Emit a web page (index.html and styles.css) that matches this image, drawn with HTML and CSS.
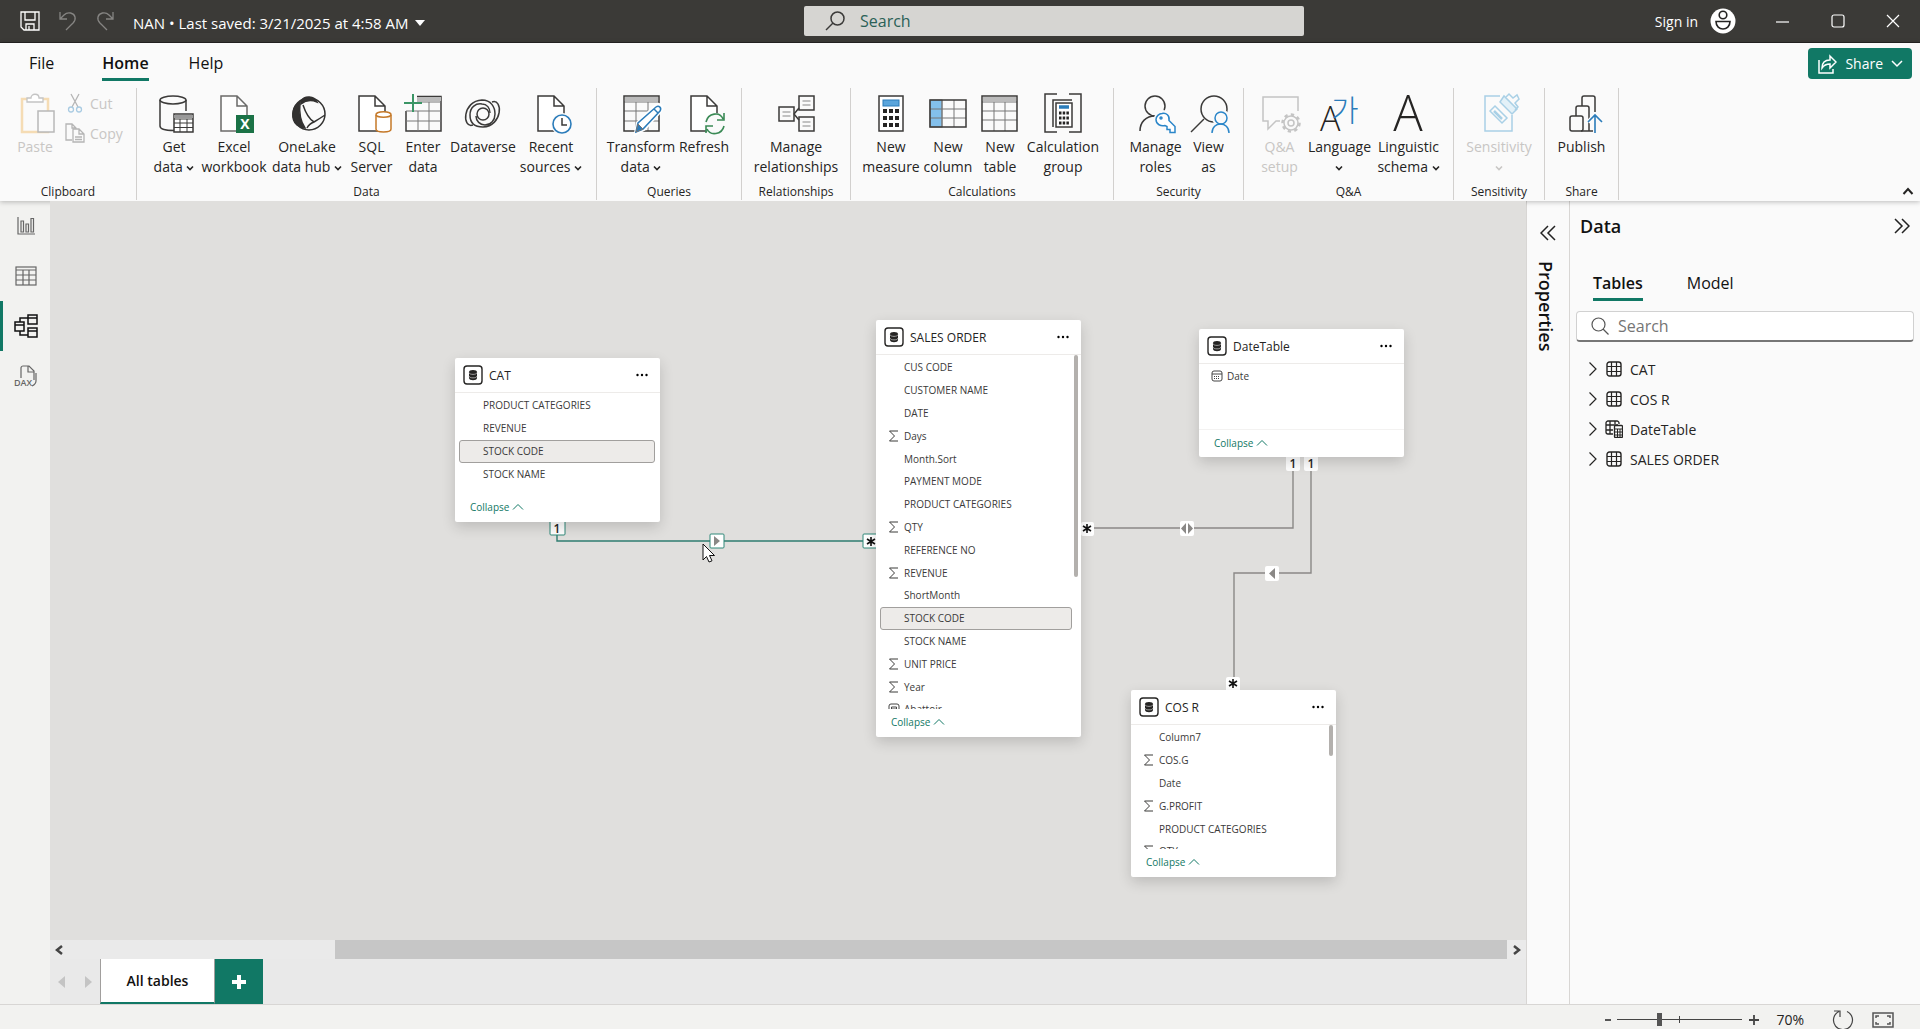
FILE: index.html
```html
<!DOCTYPE html>
<html lang="en">
<head>
    <meta charset="UTF-8">
    <meta name="viewport" content="width=device-width, initial-scale=1.0">
    <title>NAN - Model view</title>
    <link rel="stylesheet" href="styles.css">
</head>
<body>
    <!-- shared icons -->
    <svg class="defs" width="0" height="0">
        <symbol id="chev" viewBox="0 0 8 8"><path d="M1 2.5l3 3 3-3" fill="none" stroke="currentColor" stroke-width="1.6"/></symbol>
        <symbol id="up" viewBox="0 0 12 8"><path d="M1 6.5l5-5 5 5" fill="none" stroke="currentColor"/></symbol>
        <symbol id="sum" viewBox="0 0 12 12"><path d="M10 1H1.500l5 5-5 5H10" fill="none" stroke="currentColor"/></symbol>
        <symbol id="db" viewBox="0 0 20 20">
            <rect x="1" y="1" width="18" height="18" rx="3" fill="#fff" stroke="#252423" stroke-width="1.4"/>
            <path d="M6 7v6c0 3 8 3 8 0V7z" fill="#252423"/><ellipse cx="10" cy="7" rx="4" ry="2" fill="#252423"/>
            <path d="M6 7.500c0 2.500 8 2.500 8 0M6 11c0 2.500 8 2.500 8 0" fill="none" stroke="#bbb" stroke-width=".8"/>
        </symbol>
        <symbol id="dots" viewBox="0 0 12 4"><circle cx="1.500" cy="2" r="1.200"/><circle cx="6" cy="2" r="1.200"/><circle cx="10.500" cy="2" r="1.200"/></symbol>
        <symbol id="tbl" viewBox="0 0 16 16"><rect x="1" y="1" width="14" height="14" rx="2.500" fill="none" stroke="currentColor" stroke-width="1.400"/><path d="M5.500 1v14M10.500 1v14M1 5.500h14M1 10.500h14" stroke="currentColor" stroke-width="1.200"/></symbol>
        <symbol id="tbl-calc" viewBox="0 0 18 18"><path d="M14 4V3c0-1-1-2-2-2H3C2 1 1 2 1 3v9c0 1 1 2 2 2h5M5 1v13M1 5h12M1 10h7M10 1v3" fill="none" stroke="currentColor" stroke-width="1.300"/><rect x="9.500" y="5.500" width="8" height="12" rx="1" fill="#fff" stroke="currentColor" stroke-width="1.300"/><path d="M10 9h7M10 12h7M10 15h7M12.500 9v8M15 9v8" stroke="currentColor"/></symbol>
        <symbol id="right" viewBox="0 0 10 16"><path d="M1.500 1.500L8 8l-6.500 6.500" fill="none" stroke="currentColor" stroke-width="1.200"/></symbol>
        <symbol id="page" viewBox="0 0 40 40"><path d="M23 3H7v35h26V13zM23 3v10h10" fill="#fff" stroke="#3b3a39" stroke-width="1.500"/></symbol>
    </svg>

    <header class="titlebar">
        <div class="title-left">
            <button class="plain" aria-label="Save"><svg width="20" height="20" fill="none" stroke="#fff" stroke-width="1.300"><path d="M1 1h18v18H4l-3-3zM5 1v8h10V1M6 19v-6h8v6M9 15v4"/></svg></button>
            <button class="plain" aria-label="Undo"><svg width="18" height="20" fill="none" stroke="#868583" stroke-width="1.300"><path d="M1 1v7h7M1 8l4-4c4-4 10-2 11 2s-1 5-3 7l-6 6"/></svg></button>
            <button class="plain" aria-label="Redo"><svg width="18" height="20" fill="none" stroke="#868583" stroke-width="1.300"><path d="M17 1v7h-7M17 8l-4-4C9 0 3 2 2 6s1 5 3 7l6 6"/></svg></button>
            <button class="plain file-name">NAN • Last saved: 3/21/2025 at 4:58 AM <svg width="10" height="6" fill="#fff"><path d="M0 0h10L5 6z"/></svg></button>
        </div>
        <label class="title-search">
            <svg width="20" height="20" fill="none" stroke="#3b3a39" stroke-width="1.500"><circle cx="12.500" cy="7.500" r="6.500"/><path d="M8 12l-7 7"/></svg>
            <input type="text" placeholder="Search" aria-label="Search">
        </label>
        <div class="title-right">
            <button class="plain">Sign in</button>
            <svg class="avatar" width="26" height="26" fill="none" stroke="#252423" stroke-width="1.600"><circle cx="13" cy="13" r="12.500" fill="#fff" stroke="none"/><circle cx="13" cy="7" r="3.800"/><path d="M6 13.500h14c0 10-14 10-14 0z"/></svg>
            <button class="win" aria-label="Minimize"><svg width="14" height="14" stroke="#fff" stroke-width="1.200"><path d="M0 8h13"/></svg></button>
            <button class="win" aria-label="Maximize"><svg width="14" height="14" fill="none" stroke="#fff" stroke-width="1.200"><rect x="1" y="1" width="12" height="12" rx="2"/></svg></button>
            <button class="win" aria-label="Close"><svg width="14" height="14" stroke="#fff" stroke-width="1.200"><path d="M1 1l12 12M13 1L1 13"/></svg></button>
        </div>
    </header>

    <div class="ribbon">
        <nav class="tabs">
            <a href="#" class="tab file">File</a>
            <a href="#" class="tab active">Home</a>
            <a href="#" class="tab">Help</a>
            <button class="share"><svg width="20" height="20" fill="none" stroke="#fff" stroke-width="1.500"><path d="M2 6v13h14v-4M5 14c0-6 3-8 8-8V2l6 6-6 6v-4c-4 0-6 1-8 4z"/></svg>Share<svg width="12" height="8" fill="none" stroke="#fff" stroke-width="1.500"><path d="M1 1l5 5 5-5"/></svg></button>
        </nav>
        <div class="groups">
            <section class="group clipboard">
                <div class="tools">
                    <button class="tool" disabled><svg width="40" height="40" fill="none"><path d="M12 6H7v33h26V6h-5" stroke="#f5dcb4" stroke-width="2.500"/><path d="M12 9V5h4c0-5 8-5 8 0h4v4z" stroke="#c4c4c4" stroke-width="1.300" fill="#fff"/><rect x="23" y="18" width="16" height="21" fill="#fafafa" stroke="#b8b8b8" stroke-width="1.500"/></svg>Paste</button>
                    <div class="stack">
                        <button class="small" disabled><svg width="20" height="20" fill="none" stroke="#b5b5b5" stroke-width="1.300"><path d="M6 1l7 13M14 1L7 14"/><circle cx="6" cy="16.500" r="2.500" stroke="#a9cbe2"/><circle cx="14" cy="16.500" r="2.500" stroke="#a9cbe2"/></svg>Cut</button>
                        <button class="small" disabled><svg width="20" height="20" fill="none" stroke="#b5b5b5" stroke-width="1.300"><path d="M7 17H1V1h6l4 4v1M7 1v4h4"/><path d="M8 6h6l5 5v8H8zM14 6v5h5M10 14h7M10 16.500h7"/></svg>Copy</button>
                    </div>
                </div>
                <h3>Clipboard</h3>
            </section>
            <section class="group data">
                <div class="tools">
                    <button class="tool"><svg width="40" height="40" fill="none" stroke="#3b3a39" stroke-width="1.500"><path d="M6 7v26c0 3 6 4.500 14 4.500M32 7v11"/><ellipse cx="19" cy="7" rx="13" ry="4"/><rect x="20" y="21" width="19" height="18" fill="#fff"/><path d="M20 23.500h19" stroke="#999" stroke-width="3"/><path d="M20 26h19M20 30h19M20 34.500h19M26 26v13M33 26v13" stroke-width="1"/></svg>Get<br>data <svg class="chev"><use href="#chev"/></svg></button>
                    <button class="tool"><svg width="40" height="40"><use href="#page" opacity=".75"/><rect x="22" y="22" width="18" height="18" fill="#1b7246"/><text x="31" y="36" class="xl">X</text></svg>Excel<br>workbook</button>
                    <button class="tool"><svg width="40" height="40" fill="none" stroke="#323130" stroke-width="1.500"><circle cx="22" cy="21" r="16"/><path d="M14 8c4-6 13-5 16 1-5-2-11-2-16 2z" fill="#323130"/><path d="M13 9C4 14 4 27 10 32c3 2 6 3 8 3-5-7-6-16-5-26z" fill="#323130"/><path d="M16 12c3 9 6 14 11 17 5-3 8-5 11-7M20 35c2-4 4-5 7-6"/></svg>OneLake<br>data hub <svg class="chev"><use href="#chev"/></svg></button>
                    <button class="tool"><svg width="40" height="40"><use href="#page"/><path d="M24 22v14c0 4 15 4 15 0V22" fill="#fff" stroke="#c57929" stroke-width="1.500"/><ellipse cx="31.500" cy="21.500" rx="7.500" ry="2.800" fill="#fff" stroke="#c57929" stroke-width="1.500"/></svg>SQL<br>Server</button>
                    <button class="tool"><svg width="40" height="40" fill="none" stroke="#3b3a39"><path d="M14 3.500h24V38H3V18" stroke-width="1.500"/><path d="M14 6h24" stroke="#bbb" stroke-width="4"/><path d="M14 9h24M3 18h35M3 28h35M15 18v20M26 9v29" stroke="#777"/><path d="M1 10h18M10 1v18" stroke="#3a9565" stroke-width="2"/></svg>Enter<br>data</button>
                    <button class="tool"><svg width="40" height="40" fill="none" stroke="#3b3a39" stroke-width="1.500"><path d="M10 32C-1 36-1 8 19 7c9 0 13 7 13 14 0 6-4 11-10 11-5 0-9-4-9-9"/><path d="M29 9c11-4 11 24-9 25-9 0-13-5-13-12 0-8 6-12 12-11 5 0 8 4 8 9"/><circle cx="20" cy="21" r="6"/></svg>Dataverse</button>
                    <button class="tool"><svg width="40" height="40"><use href="#page"/><circle cx="31" cy="31" r="11" fill="#fafafa"/><circle cx="31" cy="31" r="9" fill="#fff" stroke="#2b7cba" stroke-width="1.600"/><path d="M31 25v7h5" fill="none" stroke="#3b3a39" stroke-width="1.500"/></svg>Recent<br>sources <svg class="chev"><use href="#chev"/></svg></button>
                </div>
                <h3>Data</h3>
            </section>
            <section class="group queries">
                <div class="tools">
                    <button class="tool"><svg width="40" height="40" fill="none" stroke="#777"><path d="M4 6h33" stroke="#bbb" stroke-width="4"/><path d="M3 9h35M3 18h35M3 28h35M15 9v29M27 9v29"/><rect x="3" y="3" width="35" height="35" stroke="#3b3a39" stroke-width="1.500"/><path d="M15 40l2-10 18-17c3-3 7 1 5 4L23 36z" fill="#fff" stroke="#fff" stroke-width="4"/><path d="M15 39l2-9 18-16c3-2 6 1 4 4L22 36zM33 16l4 4" fill="#fff" stroke="#2b7cba" stroke-width="1.500"/><path d="M15 39l2-8 5 5z" fill="#2b7cba"/></svg>Transform<br>data <svg class="chev"><use href="#chev"/></svg></button>
                    <button class="tool"><svg width="40" height="40"><use href="#page"/><circle cx="31" cy="31" r="11" fill="#fafafa"/><path d="M22 29c2-9 14-11 17-3M40 20v7h-7M40 33c-2 9-14 10-17 3M22 40v-7h7" fill="none" stroke="#3a8a55" stroke-width="1.600"/></svg>Refresh</button>
                </div>
                <h3>Queries</h3>
            </section>
            <section class="group relationships">
                <div class="tools">
                    <button class="tool"><svg width="40" height="40" fill="none" stroke="#3b3a39" stroke-width="1.500"><rect x="3" y="14" width="15" height="14"/><rect x="23" y="3" width="15" height="14"/><rect x="23" y="24" width="15" height="14"/><path d="M18 21l5-6M18 21l5 6"/><path d="M6.500 19h8M6.500 23h8M26.500 8h8M26.500 12h8M26.500 29h8M26.500 33h8" stroke="#888" stroke-width="1"/></svg>Manage<br>relationships</button>
                </div>
                <h3>Relationships</h3>
            </section>
            <section class="group calculations">
                <div class="tools">
                    <button class="tool"><svg width="40" height="40"><rect x="8" y="3" width="24" height="35" fill="#fff" stroke="#3b3a39" stroke-width="1.500"/><rect x="12" y="7" width="16" height="6" fill="#5aa5dc" stroke="#2b7cba"/><path d="M12 18h16M12 25h16M12 32h16" stroke="#252423" stroke-width="4" stroke-dasharray="4 2"/></svg>New<br>measure</button>
                    <button class="tool"><svg width="40" height="40" fill="none" stroke="#777"><rect x="2" y="7" width="12" height="27" fill="#83c0ec"/><path d="M2 16h36M2 25h36M14 7v27M26 7v27"/><rect x="2" y="7" width="36" height="27" stroke="#3b3a39" stroke-width="1.500"/></svg>New<br>column</button>
                    <button class="tool"><svg width="40" height="40" fill="none" stroke="#777"><path d="M3 6h33" stroke="#bbb" stroke-width="4"/><path d="M2 9h35M2 18h35M2 27h35M14 9v29M25 9v29"/><rect x="2" y="3" width="35" height="35" stroke="#3b3a39" stroke-width="1.500"/></svg>New<br>table</button>
                    <button class="tool"><svg width="40" height="40" fill="none" stroke="#3b3a39" stroke-width="1.500"><path d="M14 1H2v38h12M26 1h12v38H26"/><path d="M10 34V7h19"/><rect x="13" y="10" width="16" height="24" fill="#fff"/><path d="M16 14h10" stroke="#2b7cba" stroke-width="3.500"/><path d="M16 20h10M16 25h10M16 30h10" stroke="#252423" stroke-width="3" stroke-dasharray="2.500 1.200"/></svg>Calculation<br>group</button>
                </div>
                <h3>Calculations</h3>
            </section>
            <section class="group security">
                <div class="tools">
                    <button class="tool"><svg width="40" height="40" fill="none" stroke="#3b3a39" stroke-width="1.500"><circle cx="20" cy="13" r="10"/><path d="M5 38c0-9 6-15 15-15"/><circle cx="28" cy="26" r="6.500" fill="#fafafa" stroke="#fafafa" stroke-width="5"/><path d="M27 20.500c4-1 8 2 7 7l6 6v6h-5v-3h-3v-3l-2-1c-4 1-9-1-9-6 0-3 3-6 6-6z" stroke="#2b86c9" fill="#fff"/><circle cx="26" cy="25" r="1" stroke="#2b86c9"/></svg>Manage<br>roles</button>
                    <button class="tool"><svg width="40" height="40" fill="none" stroke="#3b3a39" stroke-width="1.500"><circle cx="25" cy="16" r="13"/><path d="M15 26L2 39"/><circle cx="32" cy="25" r="9" fill="#fafafa" stroke="none"/><g stroke="#2b86c9"><circle cx="32" cy="25" r="6"/><path d="M23 40c0-12 17-12 17 0"/></g></svg>View<br>as</button>
                </div>
                <h3>Security</h3>
            </section>
            <section class="group qna">
                <div class="tools">
                    <button class="tool" disabled><svg width="40" height="40" fill="none" stroke="#c4c4c4" stroke-width="1.500"><path d="M20 28h-4l-8 8v-8H3V4h35v14"/><circle cx="31" cy="30" r="7"/><circle cx="31" cy="30" r="3"/><circle cx="31" cy="30" r="8.500" stroke-width="2.500" stroke-dasharray="3.300 3.300"/></svg>Q&amp;A<br>setup</button>
                    <button class="tool"><svg width="40" height="40"><text x="1" y="38" class="lang-a">A</text><text x="12" y="28" class="lang-ko">가</text></svg>Language<br><svg class="chev"><use href="#chev"/></svg></button>
                    <button class="tool"><svg width="40" height="40"><text x="20" y="38" class="big-a">A</text></svg>Linguistic<br>schema <svg class="chev"><use href="#chev"/></svg></button>
                </div>
                <h3>Q&amp;A</h3>
            </section>
            <section class="group sensitivity">
                <div class="tools">
                    <button class="tool" disabled><svg width="40" height="40" fill="none" stroke="#a9d0e6" stroke-width="1.500"><path d="M21 3H6v35h27V22"/><path d="M11 18l5-5 12 12-5 5z"/><path d="M15 18l8 8" stroke-width="2.500"/><path d="M21 9l4-6 13 13-5 5z" fill="#e3f1f8"/><path d="M27 4l3-3 4 4 4-3 2 4-4 4 3 4-3 3"/></svg>Sensitivity<br><svg class="chev"><use href="#chev"/></svg></button>
                </div>
                <h3>Sensitivity</h3>
            </section>
            <section class="group publish">
                <div class="tools">
                    <button class="tool"><svg width="40" height="40" fill="none" stroke="#3b3a39" stroke-width="1.500"><rect x="8" y="23" width="13" height="15" rx="2"/><path d="M14 23v-8c0-1 1-2 2-2h9c1 0 2 1 2 2v23M20 13V5c0-1 1-2 2-2h9c1 0 2 1 2 2v14M19 38h12"/><path d="M33 40V22M26 29l7-7 7 7" stroke="#fafafa" stroke-width="4"/><path d="M33 40V22M26 29l7-7 7 7" stroke="#2b7cba" stroke-width="1.600"/></svg>Publish</button>
                </div>
                <h3>Share</h3>
            </section>
            <button class="plain ribbon-up" aria-label="Collapse the ribbon"><svg width="12" height="8" fill="none" stroke="#252423" stroke-width="2"><path d="M1.500 7L6 2l4.500 5"/></svg></button>
        </div>
    </div>

    <div class="main">
        <nav class="views">
            <a href="#" aria-label="Report view"><svg width="20" height="20" fill="none" stroke="#666" stroke-width="1.200"><path d="M2 1v17h17"/><path d="M5 5h2.500v11H5zM10 8h2.500v8H10zM15 2.500h2.500V16H15z"/></svg></a>
            <a href="#" aria-label="Table view"><svg width="22" height="20" fill="none" stroke="#666" stroke-width="1.200"><rect x="1" y="1" width="20" height="18"/><path d="M1 4h20M1 9h20M1 14h20M8 4v15M14 4v15"/></svg></a>
            <a href="#" class="current" aria-label="Model view"><svg width="24" height="24" fill="none" stroke="#111" stroke-width="1.500"><rect x="1" y="8" width="9" height="9"/><rect x="14" y="1" width="9" height="9"/><rect x="14" y="14" width="9" height="9"/><path d="M1 11h9M14 4h9M14 17h9M6 8V4h8M6 17v4h8"/></svg></a>
            <a href="#" aria-label="DAX query view"><svg width="24" height="24" fill="none" stroke="#666" stroke-width="1.200"><path d="M7 14V4c0-1 1-2 2-2h6l5 5v9M14 2v6h6M22 9v8c0 3-2 4-4 5"/><text x="0" y="22" class="dax">DAX</text></svg></a>
        </nav>

        <div class="workspace">
            <div class="canvas">
                <svg class="lines" width="1476" height="739">
                    <g fill="none" stroke="#8a8886" stroke-width="1.400">
                        <path d="M1032 327h211v-71M1261 256v116h-77v117"/>
                        <path d="M507 327v13h319" stroke="#2f7d70"/>
                    </g>
                    <g fill="#fff">
                        <rect x="500" y="318" width="15" height="16" rx="1" stroke="#2f8878"/>
                        <rect x="660" y="333" width="14" height="14" rx="1" stroke="#2f8878"/>
                        <rect x="813" y="333" width="15" height="14" rx="1" stroke="#2f8878"/>
                        <rect x="1031" y="321" width="13" height="14" rx="2"/>
                        <rect x="1130" y="320" width="14" height="15" rx="2"/>
                        <rect x="1236" y="252" width="14" height="18" rx="2"/>
                        <rect x="1254" y="252" width="14" height="18" rx="2"/>
                        <rect x="1215" y="365" width="14" height="15" rx="2"/>
                        <rect x="1176" y="476" width="14" height="15" rx="2"/>
                    </g>
                    <g fill="#8a8886">
                        <path d="M664 335v10l6-5zM1136 322v11l-5-5.500zM1138 322v11l5-5.500zM1225 367v11l-6-5.500z"/>
                    </g>
                    <g stroke="#111" stroke-width="1.600">
                        <path d="M821 336v9M817 338l8 5M817 343l8-5"/>
                        <path d="M1037 323v9M1033 325l8 5M1033 330l8-5"/>
                        <path d="M1183 478v9M1179 480l8 5M1179 485l8-5"/>
                    </g>
                    <text x="507" y="332">1</text><text x="1243" y="267">1</text><text x="1261" y="267">1</text>
                </svg>

                <article class="card cat">
                    <header><svg width="20" height="20"><use href="#db"/></svg><h2>CAT</h2><button class="plain" aria-label="More options"><svg width="12" height="4"><use href="#dots"/></svg></button></header>
                    <ul>
                        <li>PRODUCT CATEGORIES</li>
                        <li>REVENUE</li>
                        <li class="picked">STOCK CODE</li>
                        <li>STOCK NAME</li>
                    </ul>
                    <footer><button class="plain">Collapse <svg width="12" height="8"><use href="#up"/></svg></button></footer>
                </article>

                <article class="card sales">
                    <header><svg width="20" height="20"><use href="#db"/></svg><h2>SALES ORDER</h2><button class="plain" aria-label="More options"><svg width="12" height="4"><use href="#dots"/></svg></button></header>
                    <ul>
                        <li>CUS CODE</li>
                        <li>CUSTOMER NAME</li>
                        <li>DATE</li>
                        <li><svg><use href="#sum"/></svg>Days</li>
                        <li>Month.Sort</li>
                        <li>PAYMENT MODE</li>
                        <li>PRODUCT CATEGORIES</li>
                        <li><svg><use href="#sum"/></svg>QTY</li>
                        <li>REFERENCE NO</li>
                        <li><svg><use href="#sum"/></svg>REVENUE</li>
                        <li>ShortMonth</li>
                        <li class="picked">STOCK CODE</li>
                        <li>STOCK NAME</li>
                        <li><svg><use href="#sum"/></svg>UNIT PRICE</li>
                        <li><svg><use href="#sum"/></svg>Year</li>
                        <li><svg viewBox="0 0 12 12" fill="none" stroke="#444"><rect x="1" y="1" width="10" height="10" rx="2"/><path d="M3.500 4h5v2h-5z"/></svg>Abattoir</li>
                    </ul>
                    <i class="thumb"></i>
                    <footer><button class="plain">Collapse <svg width="12" height="8"><use href="#up"/></svg></button></footer>
                </article>

                <article class="card dates">
                    <header><svg width="20" height="20"><use href="#db"/></svg><h2>DateTable</h2><button class="plain" aria-label="More options"><svg width="12" height="4"><use href="#dots"/></svg></button></header>
                    <ul>
                        <li><svg viewBox="0 0 12 12" fill="none" stroke="#444"><rect x="1" y="1" width="10" height="10" rx="2"/><path d="M1 4h10"/><path d="M3 6.500h6M3 8.500h6" stroke-dasharray="1 1"/></svg>Date</li>
                    </ul>
                    <footer><button class="plain">Collapse <svg width="12" height="8"><use href="#up"/></svg></button></footer>
                </article>

                <article class="card cosr">
                    <header><svg width="20" height="20"><use href="#db"/></svg><h2>COS R</h2><button class="plain" aria-label="More options"><svg width="12" height="4"><use href="#dots"/></svg></button></header>
                    <ul>
                        <li>Column7</li>
                        <li><svg><use href="#sum"/></svg>COS.G</li>
                        <li>Date</li>
                        <li><svg><use href="#sum"/></svg>G.PROFIT</li>
                        <li>PRODUCT CATEGORIES</li>
                        <li><svg><use href="#sum"/></svg>QTY</li>
                    </ul>
                    <i class="thumb"></i>
                    <footer><button class="plain">Collapse <svg width="12" height="8"><use href="#up"/></svg></button></footer>
                </article>

                <svg class="pointer" width="13" height="20"><path d="M1 1v16l3.500-3.500L7 19l3-1.200-2.500-5.300h5z" fill="#fff" stroke="#111"/></svg>
            </div>

            <div class="hscroll">
                <button class="plain" aria-label="Scroll left"><svg width="8" height="10" fill="none" stroke="#444" stroke-width="2.500"><path d="M7 1L2 5l5 4"/></svg></button>
                <div class="track"><div class="bar"></div></div>
                <button class="plain" aria-label="Scroll right"><svg width="8" height="10" fill="none" stroke="#444" stroke-width="2.500"><path d="M1 1l5 4-5 4"/></svg></button>
            </div>

            <div class="sheets">
                <button class="plain" aria-label="Previous"><svg width="7" height="12" fill="#c4c4c4"><path d="M7 0v12L0 6z"/></svg></button>
                <button class="plain" aria-label="Next"><svg width="7" height="12" fill="#c4c4c4"><path d="M0 0v12l7-6z"/></svg></button>
                <button class="sheet">All tables</button>
                <button class="add" aria-label="New layout"><svg width="14" height="14" stroke="#fff" stroke-width="4"><path d="M7 0v14M0 7h14"/></svg></button>
            </div>
        </div>

        <aside class="properties">
            <button class="plain" aria-label="Expand properties"><svg width="16" height="16" fill="none" stroke="#222" stroke-width="1.500"><path d="M8 1L1 8l7 7M15 1L8 8l7 7"/></svg></button>
            <h2>Properties</h2>
        </aside>

        <aside class="data-pane">
            <div class="pane-head">
                <h2>Data</h2>
                <button class="plain" aria-label="Collapse data"><svg width="16" height="16" fill="none" stroke="#222" stroke-width="1.500"><path d="M1 1l7 7-7 7M8 1l7 7-7 7"/></svg></button>
            </div>
            <nav class="pane-tabs">
                <a href="#" class="tab active">Tables</a>
                <a href="#" class="tab">Model</a>
            </nav>
            <label class="pane-search">
                <svg width="18" height="18" fill="none" stroke="#555" stroke-width="1.200"><circle cx="7.500" cy="7.500" r="6.500"/><path d="M12 12l5.500 5.500"/></svg>
                <input type="text" placeholder="Search" aria-label="Search tables">
            </label>
            <ul class="tree">
                <li><svg width="10" height="16"><use href="#right"/></svg><svg width="18" height="16"><use href="#tbl"/></svg>CAT</li>
                <li><svg width="10" height="16"><use href="#right"/></svg><svg width="18" height="16"><use href="#tbl"/></svg>COS R</li>
                <li><svg width="10" height="16"><use href="#right"/></svg><svg width="18" height="18"><use href="#tbl-calc"/></svg>DateTable</li>
                <li><svg width="10" height="16"><use href="#right"/></svg><svg width="18" height="16"><use href="#tbl"/></svg>SALES ORDER</li>
            </ul>
        </aside>
    </div>

    <footer class="status">
        <button class="plain" aria-label="Zoom out"><svg width="6" height="10" stroke="#444" stroke-width="1.800"><path d="M0 5h6"/></svg></button>
        <input type="range" min="0" max="100" value="33" aria-label="Zoom">
        <button class="plain" aria-label="Zoom in"><svg width="10" height="10" stroke="#444" stroke-width="1.800"><path d="M0 5h10M5 0v10"/></svg></button>
        <span class="percent">70%</span>
        <button class="plain reset" aria-label="Reset zoom"><svg width="22" height="22" fill="none" stroke="#444" stroke-width="1.200"><path d="M15 2.500A9.500 9.500 0 1 1 7 2.500M2 2h6v6"/></svg></button>
        <button class="plain" aria-label="Fit to page"><svg width="22" height="16" fill="none" stroke="#555" stroke-width="1.500"><rect x="1" y="1" width="20" height="14"/><path d="M4 6V4h3M15 4h3v2M18 10v2h-3M7 12H4v-2"/></svg></button>
    </footer>
</body>
</html>
```
FILE: styles.css
```css
* {
    box-sizing: border-box;
}
body {
    margin: 0;
    height: 100vh;
    display: flex;
    flex-direction: column;
    overflow: hidden;
    font-family: "Open Sans", "Noto Sans", sans-serif;
    font-size: 14px;
    color: #252423;
    background: #f2f2f0;
}
h2, h3, ul {
    margin: 0;
    padding: 0;
}
ul {
    list-style: none;
}
a {
    color: inherit;
    text-decoration: none;
}
button, input {
    font: inherit;
    color: inherit;
}
svg {
    flex: none;
}
.defs {
    position: absolute;
}
.plain {
    display: flex;
    align-items: center;
    padding: 0;
    border: none;
    background: none;
}

/* title bar */
.titlebar {
    flex: none;
    display: grid;
    grid-template-columns: 804fr 500fr 616fr;
    align-items: center;
    height: 43px;
    background: #3b3a37;
    border-bottom: 1px solid #252423;
    color: #fff;
}
.title-left {
    display: flex;
    align-items: center;
    gap: 19px;
    padding-left: 20px;
}
.file-name {
    gap: 6px;
    padding-top: 4px;
    font-size: 15px;
    white-space: nowrap;
}
.title-search {
    display: flex;
    align-items: center;
    gap: 15px;
    height: 30px;
    padding-left: 21px;
    background: #d6d5d2;
    border-radius: 2px;
}
.title-search input, .pane-search input {
    flex: 1;
    min-width: 0;
    padding: 0;
    border: none;
    outline: none;
    background: none;
    font-size: 16px;
}
.title-search input::placeholder {
    color: #2b6157;
}
.title-right {
    display: flex;
    align-items: center;
    justify-content: flex-end;
}
.avatar {
    margin: 0 19px 0 12px;
}
.win {
    display: flex;
    align-items: center;
    justify-content: center;
    width: 55px;
    height: 42px;
    border: none;
    background: none;
}

/* ribbon */
.ribbon {
    flex: none;
    height: 158px;
    background: #fafafa;
    box-shadow: 0 1px 5px rgba(0, 0, 0, 0.25);
    position: relative;
}
.tabs {
    display: flex;
    align-items: center;
    gap: 40px;
    height: 45px;
    padding: 0 8px 2px 29px;
}
.tab {
    padding: 4px 0;
    border-bottom: 3px solid transparent;
    font-size: 16px;
    color: #111;
}
.tab.file {
    margin-right: 8px;
}
.tab.active {
    font-weight: 600;
    border-color: #117865;
}
.share {
    display: flex;
    align-items: center;
    gap: 8px;
    height: 31px;
    margin: 0 0 2px auto;
    padding: 0 9px;
    border: none;
    border-radius: 4px;
    background: #117865;
    color: #fff;
}
.groups {
    display: flex;
    height: 112px;
}
.group {
    display: flex;
    flex-direction: column;
    align-items: center;
    justify-content: space-between;
    border-right: 1px solid #d2d0ce;
}
.group h3 {
    font-size: 12px;
    font-weight: 400;
    line-height: 16px;
}
.tools {
    display: grid;
    justify-content: center;
    align-items: start;
    padding-top: 5px;
}
.clipboard { width: 137px; }
.clipboard .tools { grid-template-columns: 50px 66px; }
.data { width: 460px; }
.data .tools { grid-template-columns: 50px 70px 76px 53px 50px 70px 66px; }
.queries { width: 145px; }
.queries .tools { grid-template-columns: 70px 56px; }
.relationships { width: 109px; }
.calculations { width: 263px; }
.calculations .tools { grid-template-columns: 58px 56px 48px 78px; }
.security { width: 130px; }
.security .tools { grid-template-columns: 60px 46px; }
.qna { width: 210px; }
.qna .tools { grid-template-columns: 50px 70px 68px; }
.sensitivity { width: 91px; }
.publish { width: 74px; }
.tool {
    display: flow-root;
    justify-self: center;
    padding: 0;
    border: none;
    background: none;
    line-height: 20px;
    text-align: center;
    white-space: nowrap;
}
.tool > svg:first-child {
    display: block;
    margin: 0 auto 4px;
    overflow: visible;
}
.tool:disabled, .small:disabled {
    color: #c8c6c4;
}
.chev {
    width: 8px;
    height: 8px;
}
.stack {
    display: flex;
    flex-direction: column;
    gap: 10px;
}
.small {
    display: flex;
    align-items: center;
    gap: 5px;
    height: 20px;
    padding: 0 0 0 5px;
    border: none;
    background: none;
}
.xl {
    font-size: 14px;
    font-weight: 700;
    text-anchor: middle;
    fill: #fff;
}
.lang-a, .big-a {
    font-size: 34px;
    font-weight: 300;
    fill: #252423;
}
.big-a {
    font-size: 49px;
    text-anchor: middle;
}
.lang-ko {
    font-family: "Noto Sans CJK KR", sans-serif;
    font-size: 30px;
    font-weight: 300;
    fill: #2b7cba;
}
.ribbon-up {
    align-self: flex-end;
    margin: 0 6px 5px auto;
}

/* body of the window */
.main {
    flex: 1;
    min-height: 0;
    display: flex;
}
.views {
    flex: none;
    width: 50px;
    background: #f2f2f0;
}
.views a {
    display: flex;
    align-items: center;
    justify-content: center;
    height: 50px;
    border-left: 3px solid transparent;
    padding-right: 2px;
}
.views .current {
    border-color: #117865;
}
.dax {
    font-size: 9px;
    font-weight: 600;
    fill: #666;
    stroke: none;
}
.workspace {
    flex: 1;
    min-width: 0;
    display: flex;
    flex-direction: column;
    border-right: 1px solid #d8d6d4;
}
.canvas {
    flex: 1;
    min-height: 0;
    position: relative;
    overflow: hidden;
    background: #e0dfdd;
}
.lines {
    position: absolute;
    left: 0;
    top: 0;
}
.lines text {
    font-size: 12px;
    font-weight: 600;
    text-anchor: middle;
    fill: #252423;
}
.pointer {
    position: absolute;
    left: 652px;
    top: 342px;
}

/* model tables, placed on the canvas */
.card {
    position: absolute;
    display: flex;
    flex-direction: column;
    width: 205px;
    background: #fff;
    border-radius: 2px;
    box-shadow: 0 5px 14px rgba(0, 0, 0, 0.16);
}
.cat { left: 405px; top: 157px; height: 164px; }
.sales { left: 826px; top: 119px; height: 417px; }
.dates { left: 1149px; top: 128px; height: 128px; }
.cosr { left: 1081px; top: 489px; height: 187px; }
.card header {
    flex: none;
    display: flex;
    align-items: center;
    gap: 6px;
    height: 35px;
    padding: 0 12px 0 8px;
    border-bottom: 1px solid #edebe9;
}
.card h2 {
    flex: 1;
    font-size: 12px;
    font-weight: 500;
}
.card ul {
    flex: 1;
    min-height: 0;
    overflow: hidden;
    padding: 1px 5px 0 4px;
}
.card li {
    position: relative;
    height: 23px;
    padding-left: 23px;
    border: 1px solid transparent;
    border-radius: 3px;
    font-size: 10px;
    line-height: 21px;
    color: #3b3a39;
}
.card li:nth-child(5n) {
    height: 22px;
}
.card li svg {
    position: absolute;
    left: 7px;
    top: 4px;
    width: 12px;
    height: 12px;
}
.card .picked {
    background: #edebe9;
    border-color: #a19f9d;
}
.sales ul {
    padding-right: 9px;
}
.card footer {
    flex: none;
    height: 28px;
    padding: 5px 15px;
}
.dates footer {
    border-top: 1px solid #f3f2f1;
}
.card footer button {
    gap: 3px;
    font-size: 10px;
    line-height: 16px;
    color: #117865;
}
.thumb {
    position: absolute;
    top: 35px;
    right: 3px;
    width: 4px;
    height: 222px;
    border-radius: 2px;
    background: #b3b0ad;
}
.cosr .thumb {
    height: 31px;
}

.hscroll {
    flex: none;
    display: flex;
    height: 19px;
    padding: 0 5px;
    background: #eaeaea;
}
.hscroll button {
    width: 14px;
}
.hscroll button:last-child {
    justify-content: flex-end;
}
.track {
    flex: 1;
}
.bar {
    width: 81.5%;
    height: 100%;
    margin-left: auto;
    background: #c6c6c6;
}
.sheets {
    flex: none;
    display: flex;
    height: 45px;
    padding: 0 8px;
    background: #e9e9e9;
}
.sheets .plain {
    width: 27px;
}
.sheets .sheet {
    width: 115px;
    margin-left: -12px;
    border: 1px solid #a19f9d;
    border-width: 0 1px 2px;
    border-bottom-color: #117865;
    background: #fff;
    font-weight: 600;
    color: #111;
}
.sheets .add {
    display: flex;
    align-items: center;
    justify-content: center;
    width: 48px;
    padding: 0;
    border: none;
    background: #117865;
}

/* side panes */
.properties {
    flex: none;
    display: flex;
    flex-direction: column;
    align-items: center;
    gap: 20px;
    width: 43px;
    padding-top: 24px;
    background: #fafafa;
    border-right: 1px solid #d8d6d4;
}
.properties h2 {
    writing-mode: vertical-rl;
    padding-right: 5px;
    font-size: 18px;
    font-weight: 600;
    line-height: 24px;
    color: #111;
}
.data-pane {
    flex: none;
    width: 350px;
    background: #fafafa;
}
.pane-head {
    display: flex;
    align-items: center;
    justify-content: space-between;
    height: 50px;
    padding: 0 10px;
}
.pane-head h2 {
    font-size: 18px;
    font-weight: 600;
    color: #111;
}
.pane-tabs {
    display: flex;
    gap: 44px;
    padding: 17px 23px 0;
}
.pane-search {
    display: flex;
    align-items: center;
    gap: 9px;
    height: 31px;
    margin: 10px 6px 12px;
    padding-left: 14px;
    background: #fff;
    border: 1px solid #d1d1d1;
    border-bottom: 2px solid #767676;
    border-radius: 4px;
}
.pane-search input::placeholder {
    color: #757575;
}
.tree li {
    display: flex;
    align-items: center;
    gap: 7px;
    height: 30px;
    padding-left: 18px;
}

/* status bar */
.status {
    flex: none;
    display: flex;
    align-items: center;
    justify-content: flex-end;
    height: 25px;
    padding: 5px 26px 0 0;
    border-top: 1px solid #d8d6d4;
    background: #f2f2f0;
}
.status input {
    appearance: none;
    width: 125px;
    height: 13px;
    margin: 0 7px 0 6px;
    background:
        linear-gradient(#444, #444) center / 100% 1px no-repeat,
        linear-gradient(#444, #444) center / 1px 7px no-repeat;
}
.status input::-webkit-slider-thumb {
    appearance: none;
    width: 5px;
    height: 13px;
    background: #555;
}
.percent {
    margin: 0 28px 0 17px;
}
.reset {
    margin-right: 18px;
}
```
